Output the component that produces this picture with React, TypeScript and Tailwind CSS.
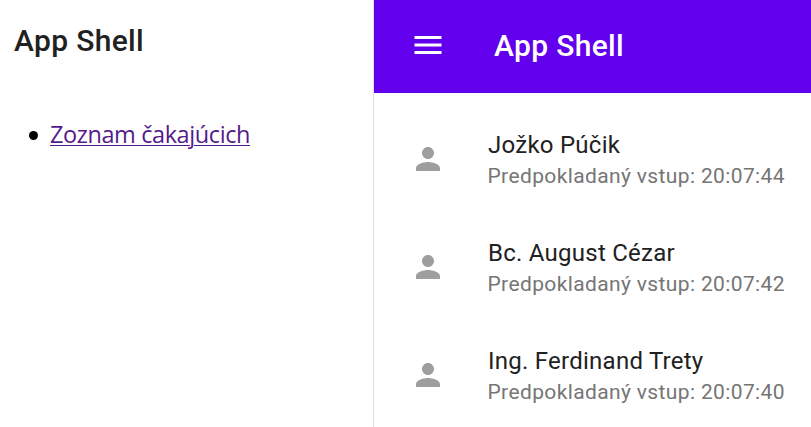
const people = [
  { name: "Jožko Púčik", time: "20:07:44" },
  { name: "Bc. August Cézar", time: "20:07:42" },
  { name: "Ing. Ferdinand Trety", time: "20:07:40" },
];

function PersonIcon() {
  return (
    <svg viewBox="0 0 24 24" className="size-9 shrink-0 fill-[#9e9e9e]">
      <path d="M12 12c2.21 0 4-1.79 4-4s-1.79-4-4-4-4 1.79-4 4 1.79 4 4 4zm0 2c-2.67 0-8 1.34-8 4v2h16v-2c0-2.66-5.33-4-8-4z" />
    </svg>
  );
}

function MenuIcon() {
  return (
    <svg viewBox="0 0 24 24" className="size-9 shrink-0 fill-white">
      <path d="M3 18h18v-2H3v2zm0-5h18v-2H3v2zm0-7v2h18V6H3z" />
    </svg>
  );
}

export default function App() {
  return (
    <div className="flex h-[427px] w-[811px] overflow-hidden bg-white font-['Roboto',sans-serif]">
      <aside className="w-[374px] shrink-0 border-r border-[#e0e0e0] pl-3.5 pt-[18px]">
        <h1 className="text-[30px] font-medium leading-[45px] tracking-[0.34px] text-[#212121]">App Shell</h1>
        <ul className="mt-[55px] pl-[15px] font-['Open_Sans','Noto_Sans',sans-serif] text-[23.5px] leading-9">
          <li className="flex items-center">
            <span className="mr-3 size-[9px] rounded-full bg-black" />
            <a
              href="#"
              className="-mt-0.5 whitespace-nowrap tracking-[-0.4px] text-[#551a8b] underline decoration-1 underline-offset-[2px]"
            >
              Zoznam čakajúcich
            </a>
          </li>
        </ul>
      </aside>
      <main className="min-w-0 flex-1">
        <header className="flex h-[93px] items-center bg-[#6200ee] pb-[3px] pl-9 text-white">
          <MenuIcon />
          <h2 className="ml-12 text-[30px] font-medium leading-[45px] tracking-[0.34px]">App Shell</h2>
        </header>
        <ul className="pt-3">
          {people.map((p) => (
            <li key={p.name} className="flex h-[108px] items-center pl-9">
              <PersonIcon />
              <div className="ml-[42px] whitespace-nowrap pt-[4px]">
                <div className="text-[24px] leading-[30px] tracking-[0.25px] text-[#212121]">{p.name}</div>
                <div className="-ml-[0.5px] text-[21px] leading-[32px] tracking-[0.37px] text-[#757575]">Predpokladaný vstup: {p.time}</div>
              </div>
            </li>
          ))}
        </ul>
      </main>
    </div>
  );
}
